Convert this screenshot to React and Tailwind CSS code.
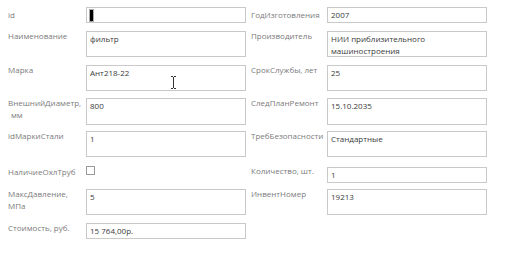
import React from "react";

function Box({ h, children, className = "" }) {
  return (
    <div
      className={`w-[160px] border border-[#c9c9c9] bg-white px-[3px] pt-[1px] text-[#3a3a3a] leading-[12px] ${h} ${className}`}
    >
      {children}
    </div>
  );
}

function Label({ children, w, pl, off }) {
  return (
    <div className={`${w} ${pl} ${off} shrink-0 text-[#7b7b7b] leading-[12px]`}>
      {children}
    </div>
  );
}

function Row({ mt = "", left, right }) {
  return (
    <div className={`flex items-start ${mt}`}>
      <Label w="w-[86px]" pl="pl-[8px]" off={left.off}>
        {left.label}
      </Label>
      {left.box}
      <Label w="w-[81px]" pl="pl-[5px]" off={right.off}>
        {right.label}
      </Label>
      {right.box}
    </div>
  );
}

export default function App() {
  return (
    <div className="relative w-[506px] h-[275px] bg-white font-['Open_Sans',sans-serif] text-[8px] overflow-hidden">
      <div className="flex flex-col pt-[7px]">
        <Row
          left={{
            label: "id",
            off: "mt-[2px]",
            box: (
              <Box h="h-[16px]">
                <div className="mt-[1px] h-[11px] w-[3px] bg-black outline outline-1 outline-[#aaa]" />
              </Box>
            ),
          }}
          right={{
            label: "ГодИзготовления",
            off: "mt-[2px]",
            box: <Box h="h-[16px]">2007</Box>,
          }}
        />
        <Row
          mt="mt-[8px]"
          left={{
            label: "Наименование",
            off: "-mt-[1px]",
            box: <Box h="h-[26px]">фильтр</Box>,
          }}
          right={{
            label: "Производитель",
            off: "-mt-[1px]",
            box: (
              <Box h="h-[26px]">
                НИИ приблизительного
                <br />
                машиностроения
              </Box>
            ),
          }}
        />
        <Row
          mt="mt-[8px]"
          left={{
            label: "Марка",
            off: "-mt-[1px]",
            box: <Box h="h-[26px]">Ант218-22</Box>,
          }}
          right={{
            label: "СрокСлужбы, лет",
            off: "-mt-[1px]",
            box: <Box h="h-[26px]">25</Box>,
          }}
        />
        <Row
          mt="mt-[7px]"
          left={{
            label: (
              <>
                ВнешнийДиаметр,
                <br />
                <span className="pl-[3px]">мм</span>
              </>
            ),
            off: "-mt-[1px]",
            box: <Box h="h-[27px]">800</Box>,
          }}
          right={{
            label: "СледПланРемонт",
            off: "-mt-[1px]",
            box: <Box h="h-[27px]">15.10.2035</Box>,
          }}
        />
        <Row
          mt="mt-[6px]"
          left={{
            label: "idМаркиСтали",
            off: "-mt-[1px]",
            box: <Box h="h-[26px]">1</Box>,
          }}
          right={{
            label: "ТребБезопасности",
            off: "-mt-[1px]",
            box: <Box h="h-[26px]">Стандартные</Box>,
          }}
        />
        <Row
          mt="mt-[9px]"
          left={{
            label: "НаличиеОхлТруб",
            off: "mt-[0px]",
            box: (
              <div className="w-[160px] h-[16px]">
                <div className="w-[9px] h-[9px] border border-[#9a9a9a] bg-white" />
              </div>
            ),
          }}
          right={{
            label: "Количество, шт.",
            off: "-mt-[1px]",
            box: <Box h="h-[16px]" className="mt-[1px]">1</Box>,
          }}
        />
        <Row
          mt="mt-[6px]"
          left={{
            label: (
              <>
                МаксДавление,
                <br />
                МПа
              </>
            ),
            off: "-mt-[1px]",
            box: <Box h="h-[26px]">5</Box>,
          }}
          right={{
            label: "ИнвентНомер",
            off: "-mt-[1px]",
            box: <Box h="h-[26px]">19213</Box>,
          }}
        />
        <Row
          mt="mt-[8px]"
          left={{
            label: "Стоимость, руб.",
            off: "-mt-[1px]",
            box: <Box h="h-[16px]">15 764,00р.</Box>,
          }}
          right={{ label: "", off: "", box: null }}
        />
      </div>
      <svg
        className="absolute left-[170px] top-[76px]"
        width="7"
        height="13"
        viewBox="0 0 7 13"
      >
        <path
          d="M1 0.5h2M4 0.5h2M3.5 1v11M1 12.5h2M4 12.5h2"
          stroke="#333"
          strokeWidth="1"
          fill="none"
        />
      </svg>
    </div>
  );
}
